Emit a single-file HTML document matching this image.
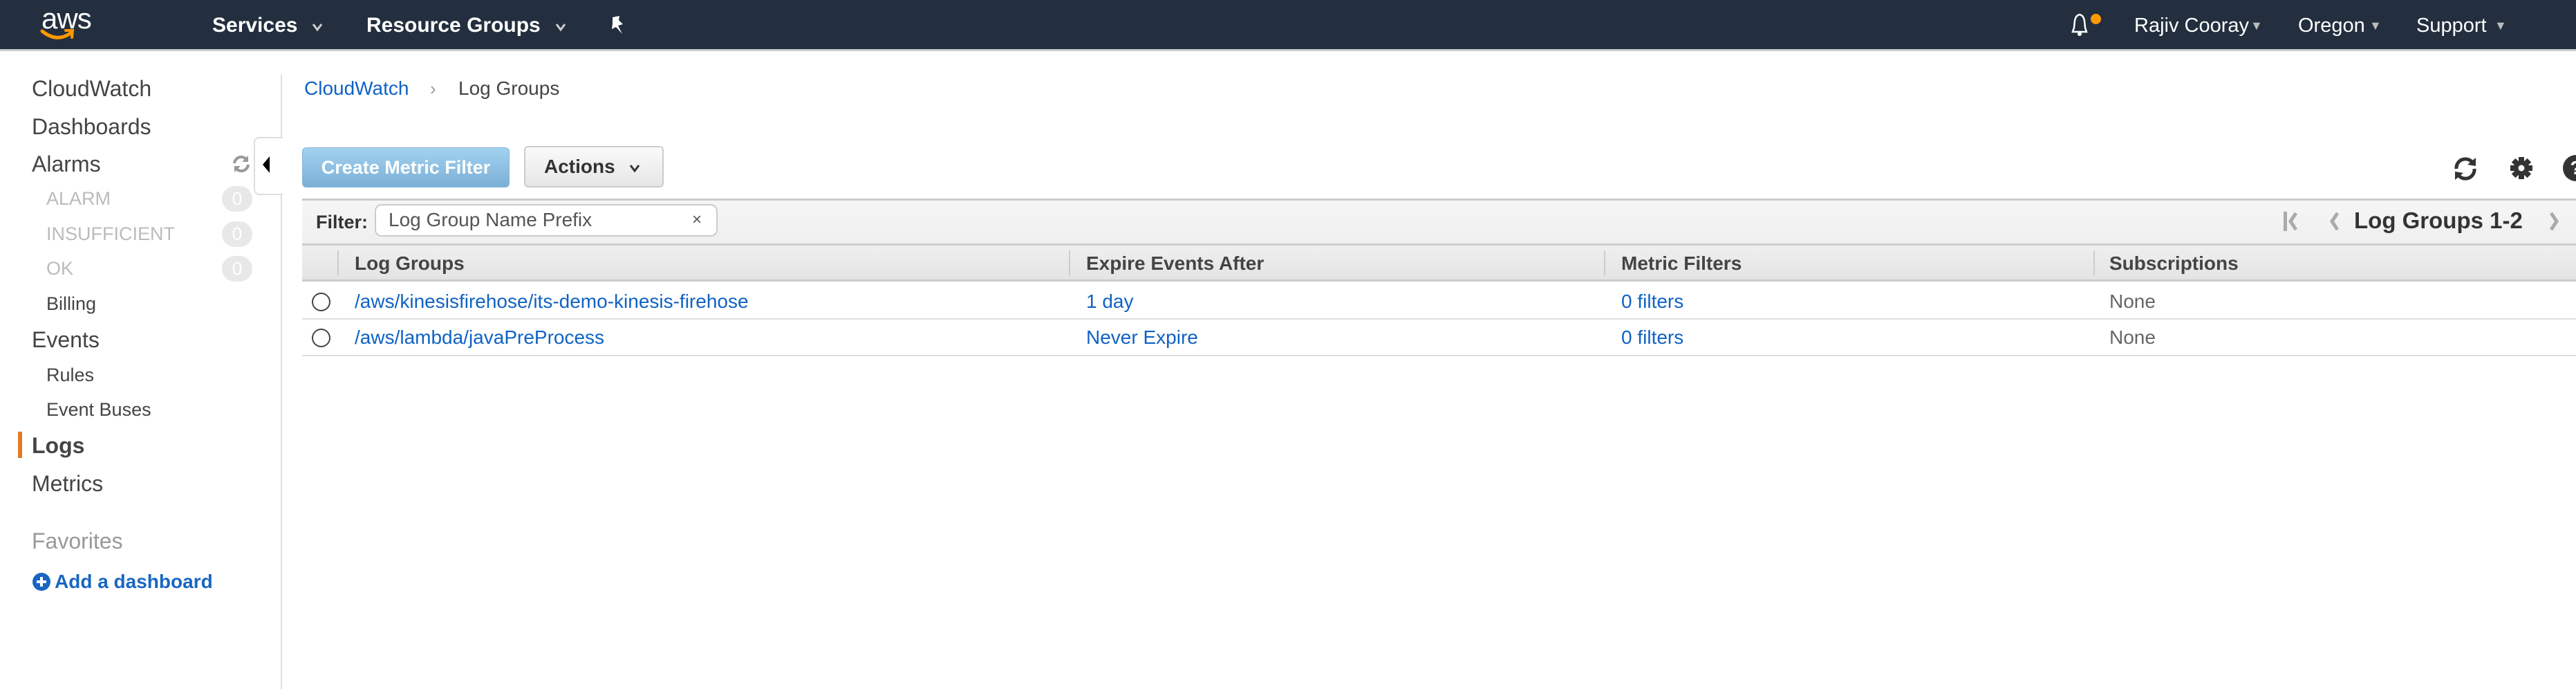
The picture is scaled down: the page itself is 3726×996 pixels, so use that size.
<!DOCTYPE html>
<html><head><meta charset="utf-8"><style>
*{margin:0;padding:0;box-sizing:border-box}
body{width:3726px;height:996px;overflow:hidden;background:#fff;font-family:"Liberation Sans",Arial,sans-serif;position:relative;color:#444}
.a{position:absolute;white-space:nowrap}
.hdr{position:absolute;left:0;top:0;width:3726px;height:74px;background:#232f3e;border-bottom:3px solid #ccc}
.nav{color:#fff;font-size:30px;line-height:30px;font-weight:bold}
.navr{color:#fff;font-size:29px;line-height:30px}
.tri{color:#bbb;font-size:18px}
.sb{font-size:32px;line-height:32px;color:#444}
.sub{font-size:27px;line-height:28px;color:#444}
.dim{color:#bbb}
.badge{position:absolute;left:321px;width:44px;height:37px;border-radius:19px;background:#e8e8e8;color:#fff;font-size:26px;line-height:37px;text-align:center}
.link{color:#0f62c4}
.td{font-size:28px;line-height:28px}
.th{font-size:28px;line-height:28px;font-weight:bold;color:#444}
</style></head><body>
<div class="hdr"></div>
<div class="a" style="left:60px;top:6px;color:#fff;font-size:42px;line-height:42px;letter-spacing:-1px">aws</div>
<svg class="a" style="left:58px;top:40px" width="50" height="22" viewBox="0 0 50 22"><path d="M3 5 Q24 22 44 8" stroke="#f90" stroke-width="5" fill="none" stroke-linecap="round"/><path d="M37 4 L47 4 L46 14" stroke="#f90" stroke-width="4" fill="none" stroke-linecap="round"/></svg>
<div class="a nav" style="left:307px;top:22px">Services</div>
<svg class="a" style="left:450px;top:32px" width="18" height="14" viewBox="0 0 18 14"><path d="M3 3 L9 11 L15 3" stroke="#ccc" stroke-width="3" fill="none"/></svg>
<div class="a nav" style="left:530px;top:22px">Resource Groups</div>
<svg class="a" style="left:802px;top:32px" width="18" height="14" viewBox="0 0 18 14"><path d="M3 3 L9 11 L15 3" stroke="#ccc" stroke-width="3" fill="none"/></svg>
<svg class="a" style="left:880px;top:22px" width="26" height="30" viewBox="0 0 26 30"><path d="M6 3 L16 1 L15 7 L21 13 L14 15 L20 27 L11 17 L5 20 L6 12 Z" fill="#fff"/></svg>
<svg class="a" style="left:2996px;top:18px" width="24" height="38" viewBox="0 0 24 38"><path d="M12 3 C4 5 5 14 4 22 L2 28 L22 28 L20 22 C19 14 20 5 12 3 Z" fill="none" stroke="#fff" stroke-width="2.5"/><circle cx="12" cy="31" r="3" fill="#fff"/></svg>
<div class="a" style="left:3024px;top:20px;width:15px;height:15px;border-radius:50%;background:#f90"></div>
<div class="a navr" style="left:3087px;top:22px">Rajiv Cooray</div>
<div class="a tri" style="left:3255px;top:27px">&#9660;</div>
<div class="a navr" style="left:3324px;top:22px">Oregon</div>
<div class="a tri" style="left:3427px;top:27px">&#9660;</div>
<div class="a navr" style="left:3495px;top:22px">Support</div>
<div class="a tri" style="left:3608px;top:27px">&#9660;</div>

<div class="a" style="left:406px;top:108px;width:2px;height:888px;background:#ddd"></div>
<div class="a sb" style="left:46px;top:112px">CloudWatch</div>
<div class="a sb" style="left:46px;top:167px">Dashboards</div>
<div class="a sb" style="left:46px;top:221px">Alarms</div>
<svg class="a" style="left:334px;top:222px" width="30" height="30" viewBox="0 0 30 30"><path d="M5 14 A10 10 0 0 1 23 9" stroke="#999" stroke-width="4" fill="none"/><path d="M25 3 L25 12 L16 12Z" fill="#999"/><path d="M25 16 A10 10 0 0 1 7 21" stroke="#999" stroke-width="4" fill="none"/><path d="M5 27 L5 18 L14 18Z" fill="#999"/></svg>
<div class="a" style="left:367px;top:198px;width:42px;height:84px;background:#fff;border:2px solid #ddd;border-right:none;border-radius:8px 0 0 8px"></div>
<div class="a" style="left:380px;top:226px;width:0;height:0;border-top:12px solid transparent;border-bottom:12px solid transparent;border-right:10px solid #000"></div>
<div class="a sub dim" style="left:67px;top:273px">ALARM</div><div class="badge" style="top:269px">0</div>
<div class="a sub dim" style="left:67px;top:324px">INSUFFICIENT</div><div class="badge" style="top:320px">0</div>
<div class="a sub dim" style="left:67px;top:374px">OK</div><div class="badge" style="top:370px">0</div>
<div class="a sub" style="left:67px;top:425px">Billing</div>
<div class="a sb" style="left:46px;top:475px">Events</div>
<div class="a sub" style="left:67px;top:528px">Rules</div>
<div class="a sub" style="left:67px;top:578px">Event Buses</div>
<div class="a" style="left:26px;top:624px;width:6px;height:38px;background:#e07b25"></div>
<div class="a sb" style="left:46px;top:628px;font-weight:bold">Logs</div>
<div class="a sb" style="left:46px;top:683px">Metrics</div>
<div class="a sb" style="left:46px;top:766px;color:#999">Favorites</div>
<svg class="a" style="left:46px;top:827px" width="28" height="28" viewBox="0 0 28 28"><circle cx="14" cy="14" r="13" fill="#1866c2"/><path d="M14 7 V21 M7 14 H21" stroke="#fff" stroke-width="4"/></svg>
<div class="a link" style="left:79px;top:827px;font-size:28px;line-height:28px;font-weight:bold;color:#1866c2">Add a dashboard</div>

<div class="a link" style="left:440px;top:113px;font-size:28px;line-height:30px">CloudWatch</div>
<div class="a" style="left:622px;top:113px;font-size:26px;line-height:30px;color:#999">›</div>
<div class="a" style="left:663px;top:113px;font-size:28px;line-height:30px;color:#444">Log Groups</div>

<div class="a" style="left:437px;top:213px;width:300px;height:58px;border-radius:6px;background:linear-gradient(#a3d2f0,#7aafd6);border:1px solid #86b5d8;color:#fff;font-weight:bold;font-size:27px;line-height:56px;text-align:center">Create Metric Filter</div>
<div class="a" style="left:758px;top:211px;width:202px;height:60px;border-radius:6px;background:linear-gradient(#fafafa,#e6e6e6);border:2px solid #ccc;color:#333;font-weight:bold;font-size:28px;line-height:56px;padding-left:27px">Actions</div>
<svg class="a" style="left:909px;top:236px" width="18" height="14" viewBox="0 0 18 14"><path d="M3 3 L9 11 L15 3" stroke="#333" stroke-width="3" fill="none"/></svg>

<svg class="a" style="left:3545px;top:224px" width="42" height="40" viewBox="0 0 42 40"><path d="M8 20 A13 13 0 0 1 32 12" stroke="#333" stroke-width="5" fill="none"/><path d="M36 4 L36 16 L24 14Z" fill="#333"/><path d="M34 20 A13 13 0 0 1 10 28" stroke="#333" stroke-width="5" fill="none"/><path d="M6 36 L6 24 L18 26Z" fill="#333"/></svg>
<svg class="a" style="left:3630px;top:226px" width="34" height="34" viewBox="0 0 34 34"><g fill="#333"><circle cx="17" cy="17" r="11"/><rect x="13" y="1" width="8" height="32"/><rect x="1" y="13" width="32" height="8"/><rect x="13" y="1" width="8" height="32" transform="rotate(45 17 17)"/><rect x="13" y="1" width="8" height="32" transform="rotate(-45 17 17)"/></g><circle cx="17" cy="17" r="4.5" fill="#fff"/></svg>
<div class="a" style="left:3707px;top:224px;width:38px;height:38px;border-radius:50%;background:#333;color:#fff;font-weight:bold;font-size:28px;line-height:38px;text-align:center">?</div>

<div class="a" style="left:437px;top:287px;width:3289px;height:68px;background:linear-gradient(#f6f6f6,#efefef);border-top:3px solid #ccc;border-bottom:3px solid #ccc"></div>
<div class="a" style="left:457px;top:306px;font-weight:bold;font-size:27px;line-height:30px;color:#333">Filter:</div>
<div class="a" style="left:542px;top:295px;width:496px;height:47px;background:#fff;border:2px solid #ccc;border-radius:10px"></div>
<div class="a" style="left:562px;top:303px;font-size:28px;line-height:30px;color:#555">Log Group Name Prefix</div>
<div class="a" style="left:1001px;top:304px;font-size:24px;line-height:28px;color:#555">×</div>
<svg class="a" style="left:3302px;top:304px" width="90" height="32" viewBox="0 0 90 32"><rect x="1" y="2" width="5" height="28" fill="#aaa"/><path d="M19 4 L11 16 L19 28" stroke="#aaa" stroke-width="5" fill="none"/><path d="M79 4 L71 16 L79 28" stroke="#aaa" stroke-width="5" fill="none"/></svg>
<div class="a" style="left:3405px;top:301px;font-size:33px;line-height:36px;font-weight:bold;color:#333">Log Groups 1-2</div>
<svg class="a" style="left:3684px;top:304px" width="24" height="32" viewBox="0 0 24 32"><path d="M6 4 L14 16 L6 28" stroke="#aaa" stroke-width="5" fill="none"/></svg>

<div class="a" style="left:437px;top:355px;width:3289px;height:52px;background:linear-gradient(#efefef,#e4e4e4);border-bottom:3px solid #ccc"></div>
<div class="a" style="left:488px;top:362px;width:2px;height:36px;background:#ccc"></div>
<div class="a" style="left:1546px;top:362px;width:2px;height:36px;background:#ccc"></div>
<div class="a" style="left:2320px;top:362px;width:2px;height:36px;background:#ccc"></div>
<div class="a" style="left:3028px;top:362px;width:2px;height:36px;background:#ccc"></div>
<div class="a th" style="left:513px;top:367px">Log Groups</div>
<div class="a th" style="left:1571px;top:367px">Expire Events After</div>
<div class="a th" style="left:2345px;top:367px">Metric Filters</div>
<div class="a th" style="left:3051px;top:367px">Subscriptions</div>

<div class="a" style="left:437px;top:460px;width:3289px;height:2px;background:#ddd"></div>
<div class="a" style="left:437px;top:513px;width:3289px;height:2px;background:#ddd"></div>
<div class="a" style="left:451px;top:423px;width:27px;height:27px;border:2px solid #444;border-radius:50%"></div>
<div class="a" style="left:451px;top:475px;width:27px;height:27px;border:2px solid #444;border-radius:50%"></div>
<div class="a td link" style="left:513px;top:422px">/aws/kinesisfirehose/its-demo-kinesis-firehose</div>
<div class="a td link" style="left:1571px;top:422px">1 day</div>
<div class="a td link" style="left:2345px;top:422px">0 filters</div>
<div class="a td" style="left:3051px;top:422px;color:#666">None</div>
<div class="a td link" style="left:513px;top:474px">/aws/lambda/javaPreProcess</div>
<div class="a td link" style="left:1571px;top:474px">Never Expire</div>
<div class="a td link" style="left:2345px;top:474px">0 filters</div>
<div class="a td" style="left:3051px;top:474px;color:#666">None</div>
</body></html>
